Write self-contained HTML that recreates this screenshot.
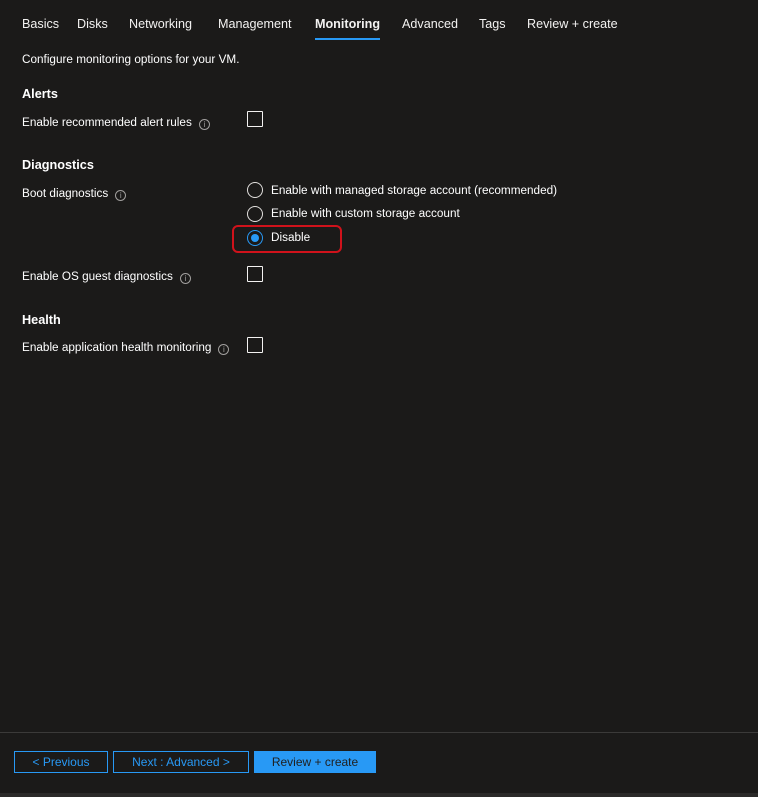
<!DOCTYPE html>
<html><head><meta charset="utf-8"><style>
*{margin:0;padding:0;box-sizing:border-box}
body{width:758px;height:797px;background:#1b1a19;color:#fff;font-family:"Liberation Sans",sans-serif;font-size:11.75px;position:relative;overflow:hidden}
.a{position:absolute;white-space:nowrap}
.tab{top:17px;font-size:12.6px;color:#f3f2f1}
.h{font-weight:bold;font-size:12.7px}
.info{display:inline-block;width:11px;height:11px;border:1px solid #a19f9d;border-radius:50%;font-size:8px;line-height:9px;text-align:center;color:#a19f9d;vertical-align:-1px;margin-left:7px}
.cb{position:absolute;width:16px;height:16px;border:1px solid #f3f2f1;border-radius:1px}
.rd{position:absolute;width:16px;height:16px;border:1px solid #e1dfdd;border-radius:50%}
.btn{position:absolute;top:751px;height:22px;border:1px solid #2899f5;color:#2899f5;font-size:12px;text-align:center;line-height:20px}
</style></head><body>
<div class="a tab" style="left:22px">Basics</div>
<div class="a tab" style="left:77px">Disks</div>
<div class="a tab" style="left:129px">Networking</div>
<div class="a tab" style="left:218px">Management</div>
<div class="a tab" style="left:315px;font-weight:bold">Monitoring</div>
<div class="a" style="left:315px;top:38px;width:65px;height:2px;background:#2899f5"></div>
<div class="a tab" style="left:402px">Advanced</div>
<div class="a tab" style="left:479px">Tags</div>
<div class="a tab" style="left:527px">Review + create</div>

<div class="a" style="left:22px;top:53px">Configure monitoring options for your VM.</div>
<div class="a h" style="left:22px;top:87px">Alerts</div>
<div class="a" style="left:22px;top:116px">Enable recommended alert rules<span class="info">i</span></div>
<div class="cb" style="left:247px;top:111px"></div>

<div class="a h" style="left:22px;top:158px">Diagnostics</div>
<div class="a" style="left:22px;top:187px">Boot diagnostics<span class="info">i</span></div>
<div class="rd" style="left:247px;top:182px"></div>
<div class="a" style="left:271px;top:184px">Enable with managed storage account (recommended)</div>
<div class="rd" style="left:247px;top:206px"></div>
<div class="a" style="left:271px;top:207px">Enable with custom storage account</div>
<div class="a" style="left:232px;top:225px;width:110px;height:28px;border:2px solid #d0121b;border-radius:6px"></div>
<div class="rd" style="left:247px;top:230px;border-color:#2899f5"></div>
<div class="a" style="left:251px;top:234px;width:8px;height:8px;border-radius:50%;background:#2899f5"></div>
<div class="a" style="left:271px;top:231px">Disable</div>

<div class="a" style="left:22px;top:270px">Enable OS guest diagnostics<span class="info">i</span></div>
<div class="cb" style="left:247px;top:266px"></div>

<div class="a h" style="left:22px;top:313px">Health</div>
<div class="a" style="left:22px;top:341px">Enable application health monitoring<span class="info">i</span></div>
<div class="cb" style="left:247px;top:337px"></div>

<div class="a" style="left:0;top:732px;width:758px;height:1px;background:#3b3a39"></div>
<div class="btn" style="left:14px;width:94px">&lt; Previous</div>
<div class="btn" style="left:113px;width:136px">Next : Advanced &gt;</div>
<div class="btn" style="left:254px;width:122px;background:#2899f5;color:#201f1e">Review + create</div>
<div class="a" style="left:0;top:793px;width:758px;height:4px;background:#2b2a29"></div>
</body></html>
